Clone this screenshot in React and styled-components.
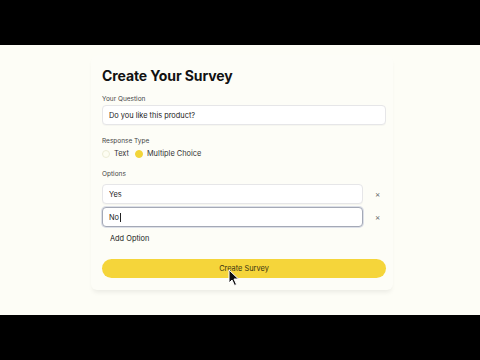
import React from "react";
import styled, { createGlobalStyle } from "styled-components";

const Global = createGlobalStyle`
    html, body {
        margin: 0;
        padding: 0;
        background: #000;
    }
    body {
        font-family: Inter, "Noto Sans", sans-serif;
    }
`;

const Frame = styled.div`
    width: 480px;
    height: 360px;
    display: flex;
    flex-direction: column;
    justify-content: center;
    background: #000;
`;

const Stage = styled.div`
    position: relative;
    height: 270px;
    padding-left: 91px;
    box-sizing: border-box;
    background: #fdfdf6;
    display: flex;
    align-items: flex-start;
`;

const Card = styled.div`
    width: 284px;
    margin-top: 10px;
    padding: 12px 7px 12px 11px;
    background: #fdfdf7;
    border-radius: 6px;
    box-shadow: 0 4px 5px -2px rgba(0, 0, 0, 0.08);
    display: flex;
    flex-direction: column;
`;

const Title = styled.h1`
    margin: 0 0 10px;
    font-size: 14px;
    line-height: 18px;
    font-weight: 700;
    color: #111;
    letter-spacing: -0.1px;
`;

const Label = styled.div`
    font-size: 6.5px;
    line-height: 8px;
    color: #444;
    margin-bottom: ${(p) => p.below || 2}px;
`;

const Field = styled.div`
    display: flex;
    align-items: center;
    height: 18px;
    padding: 0 6px;
    background: #fff;
    border: 1px solid ${(p) => (p.focused ? "#a4a9b6" : "#e6e6e8")};
    border-radius: 4px;
    font-size: 7.4px;
    color: #222;
    box-shadow: ${(p) => (p.focused ? "0 0 0 1px #dde0e8" : "0 1px 1px rgba(0,0,0,0.03)")};
    flex: 1;
`;

const Section = styled.div`
    margin-bottom: ${(p) => p.gap || 12}px;
`;

const RadioRow = styled.div`
    display: flex;
    align-items: center;
    height: 9px;
    gap: 6px;
    margin-top: 4px;
`;

const RadioItem = styled.label`
    display: flex;
    align-items: center;
    gap: 4px;
    font-size: 7.4px;
    color: #333;
`;

const Dot = styled.span`
    width: 8px;
    height: 8px;
    border-radius: 50%;
    box-sizing: border-box;
    background: ${(p) => (p.on ? "#f2d538" : "#fdfdf2")};
    border: 1px solid ${(p) => (p.on ? "#f2d538" : "#ececd6")};
`;

const OptionRow = styled.div`
    display: flex;
    align-items: center;
    margin-bottom: 3px;
`;

const Remove = styled.button`
    width: 23px;
    border: none;
    background: none;
    padding: 0 0 0 12px;
    font-family: inherit;
    font-size: 8px;
    color: #666;
    text-align: left;
`;

const Caret = styled.span`
    display: inline-block;
    width: 1px;
    height: 9px;
    background: #222;
    margin-left: 0.5px;
`;

const AddButton = styled.button`
    align-self: flex-start;
    margin: 5px 0 0 8px;
    padding: 0;
    height: 8px;
    line-height: 8px;
    border: none;
    background: none;
    font-family: inherit;
    font-size: 7.4px;
    color: #222;
`;

const Submit = styled.button`
    margin-top: 16px;
    height: 19px;
    min-height: 19px;
    padding: 0;
    border: none;
    border-radius: 10px;
    background: #f5d53a;
    font-family: inherit;
    font-size: 7.4px;
    color: #3a3210;
`;

const Cursor = styled.svg`
    position: absolute;
    left: 228px;
    top: 224px;
`;

export default function App() {
    return (
        <Frame>
            <Global />
            <Stage>
                <Card>
                    <Title>Create Your Survey</Title>
                    <Section gap={12}>
                        <Label>Your Question</Label>
                        <Field>Do you like this product?</Field>
                    </Section>
                    <Section gap={12}>
                        <Label>Response Type</Label>
                        <RadioRow>
                            <RadioItem>
                                <Dot />
                                Text
                            </RadioItem>
                            <RadioItem>
                                <Dot on />
                                Multiple Choice
                            </RadioItem>
                        </RadioRow>
                    </Section>
                    <div>
                        <Label below={6}>Options</Label>
                        <OptionRow>
                            <Field>Yes</Field>
                            <Remove>×</Remove>
                        </OptionRow>
                        <OptionRow>
                            <Field focused>
                                No
                                <Caret />
                            </Field>
                            <Remove>×</Remove>
                        </OptionRow>
                    </div>
                    <AddButton>Add Option</AddButton>
                    <Submit>Create Survey</Submit>
                </Card>
                <Cursor width="12" height="18" viewBox="0 0 12 18">
                    <path
                        d="M1 1 L1 14 L4 11 L6.5 16.5 L8.5 15.5 L6 10 L10.5 10 Z"
                        fill="#111"
                        stroke="#fff"
                        strokeWidth="1"
                        strokeLinejoin="round"
                    />
                </Cursor>
            </Stage>
        </Frame>
    );
}
